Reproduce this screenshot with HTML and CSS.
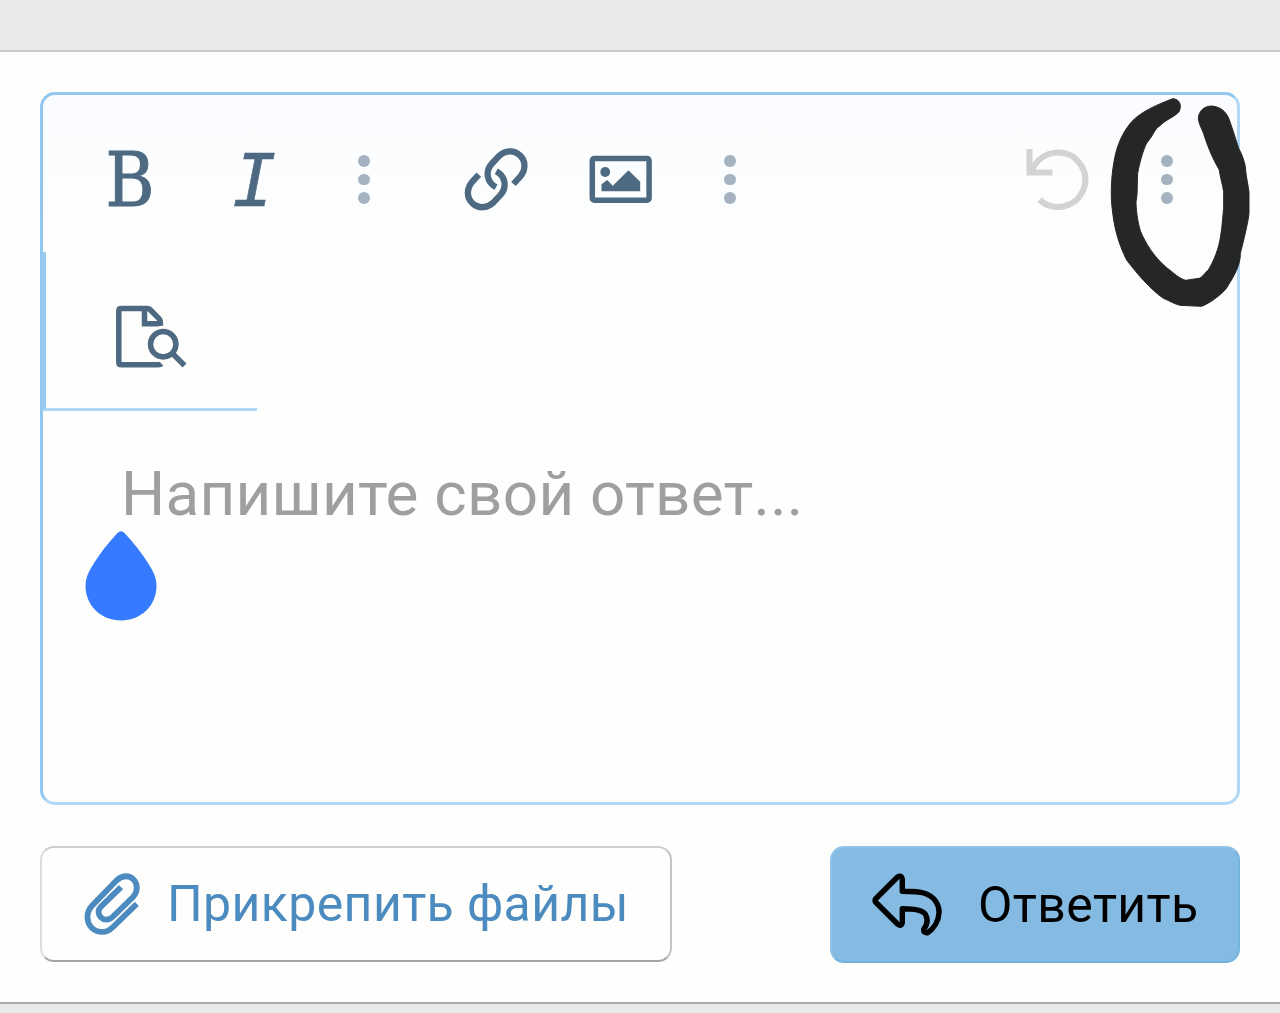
FILE: index.html
```html
<!DOCTYPE html>
<html lang="ru">
<head>
    <meta charset="UTF-8">
    <meta name="viewport" content="width=device-width, initial-scale=1.0">
    <title>Ответить</title>
    <link rel="stylesheet" href="styles.css">
</head>
<body>
    <div class="reply">
        <div class="editor">
            <div class="toolbar">
                <div class="group">
                    <button class="tool bold">B</button>
                    <button class="tool italic">I</button>
                    <button class="tool more"><i></i><i></i><i></i></button>
                </div>
                <div class="group">
                    <button class="tool">
                        <svg viewBox="0 0 80 80" stroke-width="6.3">
                            <path d="M57.5 44L62.5 38.5C71 30 69.5 20 63.5 15C57.5 9.5 49 10.5 43 16L36 23.5C29 31 30.5 42 40 47.3"/>
                            <path d="M57.5 44L62.5 38.5C71 30 69.5 20 63.5 15C57.5 9.5 49 10.5 43 16L36 23.5C29 31 30.5 42 40 47.3" transform="rotate(180 40.15 39.3)"/>
                        </svg>
                    </button>
                    <button class="tool">
                        <svg viewBox="0 0 80 80" stroke-width="5.5">
                            <rect x="11.3" y="18.5" width="56.8" height="41.7" rx="2"/>
                            <circle class="fill" cx="24.2" cy="32" r="4.9"/>
                            <path class="fill" d="M20.5 51.3V44.3L26.2 40L31.8 45.7L47.5 30.3L59.2 41.7V51.3Z"/>
                        </svg>
                    </button>
                    <button class="tool more"><i></i><i></i><i></i></button>
                </div>
                <div class="group right">
                    <button class="tool disabled">
                        <svg viewBox="0 0 80 80" stroke-width="6">
                            <path d="M13 33C17 20 28 12.400 39.800 12.400A27.3 27.3 0 1 1 21.5 59.8"/>
                            <path d="M11.5 9V32.5H34.5"/>
                        </svg>
                    </button>
                    <button class="tool more"><i></i><i></i><i></i></button>
                </div>
            </div>
            <div class="preview">
                <svg viewBox="0 0 80 80" stroke-width="5.5">
                    <path d="M50.5 66.8Q49.5 67.8 47 67.8H10.3Q7.8 67.8 7.8 65.3V14Q7.8 11.5 10.3 11.5H36.5Q38 11.5 39 12.5L48.2 21.8Q49.3 23 49.3 24.5V27"/>
                    <path d="M33.5 12V26.7H46L52 25.8"/>
                    <circle cx="52.2" cy="47.2" r="12.7"/>
                    <path d="M61.5 56.5L73.5 68.5"/>
                </svg>
            </div>
            <div class="content">
                <p>Напишите свой ответ...</p>
                <svg class="handle" viewBox="0 0 72 90">
                    <path d="M32.5 2Q36 -1.5 39.5 2C48 11 56 21 63 32C68 40 71.5 46 71.5 55C71.5 75 55.5 89.5 36 89.5C16.5 89.5 .5 75 .5 55C.5 46 4 40 9 32C16 21 24 11 32.5 2Z"/>
                </svg>
            </div>
        </div>
        <div class="actions">
            <button class="btn attach">
                <svg viewBox="0 0 56 62" stroke-width="5.8">
                    <path d="M52.8 30.8L28.5 54.5C22 61 12 60 7 54C2 48 2.3 39 7.8 33L32.5 7.5C38 2 45 2 49.5 6.5C54 11 54 18.5 49 24L28.5 44C25 47.5 20 47.5 17 44.5C14 41.5 13.5 37 17 33.7L37 14.2"/>
                </svg>
                <span>Прикрепить файлы</span>
            </button>
            <button class="btn submit">
                <svg viewBox="0 0 70 63" stroke-width="5.4" stroke-linejoin="round">
                    <path d="M4 25.5L25.5 4Q29.5 1.5 30.3 6V18.3C39 18.3 47 18.5 52.5 20.3C62 23.5 67.5 31 67 40C66.5 48 62 55.5 56 59.5Q51.5 60.5 51.7 56.3C55 52 56.5 47 53.5 41.5C51 37 43 35.7 30.3 35.7V49.5Q29.5 54 25.5 51L4 29.5Q2 27.5 4 25.5Z"/>
                </svg>
                <span>Ответить</span>
            </button>
        </div>
        <!-- marker stroke around the last menu -->
        <svg class="marker" viewBox="330 36 420 630">
            <path d="M518 41C475 58 425 78 395 110C365 145 350 185 343 225C334 270 331 330 337 375C342 420 352 470 380 525C410 565 450 612 490 640C510 648 525 658 540 661L605 664C640 650 680 615 685 600C705 570 722 535 721 505C730 470 745 410 747 385V320C744 300 738 270 737 255C737 240 728 212 716 190C705 155 697 130 688 105C678 75 655 64 634 63C610 64 596 80 595 100C596 118 610 140 612 150C625 190 640 225 658 255C660 275 668 300 671 320V370C668 395 666 430 663 445C658 490 640 530 625 555C615 562 605 580 597 580L557 586C535 580 515 558 500 548C460 515 435 470 422 440C412 410 408 370 408 350C413 330 411 300 413 265C420 225 435 180 442 172C460 150 465 130 480 122C495 105 525 95 537 80C545 65 542 42 518 41Z"/>
        </svg>
    </div>
</body>
</html>
```
FILE: styles.css
```css
* {
    box-sizing: border-box;
}
body {
    margin: 0;
    padding: 50px 0 10px;
    height: 1013px;
    background: #e9e9e9;
    font-family: Roboto, sans-serif;
    overflow: hidden;
}
.reply {
    position: relative;
    height: 954px;
    padding: 40px 40px 0;
    background: #fefefd;
    border-top: 2px solid #cbcbcb;
    border-bottom: 2px solid #a9a9a9;
}
button {
    padding: 0;
    border: none;
    background: none;
    font-family: inherit;
}
svg {
    display: block;
    fill: none;
    stroke: currentColor;
}
.fill {
    fill: currentColor;
    stroke: none;
}
.editor {
    height: 713px;
    border: 3px solid;
    border-color: #92c8f0 #b0d9f7 #b0d9f7 #92c8f0;
    border-radius: 15px;
    background: linear-gradient(#fafcff, #fefefd 160px);
}
.toolbar {
    display: flex;
    gap: 22px;
    height: 157px;
    padding: 12px 23px 0 24px;
    color: #4d6a82;
}
.group {
    display: flex;
    align-items: center;
}
.right {
    margin-left: auto;
}
.tool {
    display: flex;
    align-items: center;
    justify-content: center;
    width: 125px;
    height: 100px;
    color: #4d6a82;
}
.tool svg, .preview svg {
    width: 80px;
    height: 80px;
}
.bold {
    padding: 1px 0 0 1px;
    font: 74px "DejaVu Serif Condensed", "DejaVu Serif", serif;
    font-stretch: condensed;
    -webkit-text-stroke: 1px #4d6a82;
}
.italic {
    padding-top: 1px;
    font: italic 73px "DejaVu Sans Mono", monospace;
    -webkit-text-stroke: .5px #4d6a82;
}
.more {
    flex-direction: column;
    gap: 7px;
    width: 94px;
}
.more i {
    width: 11.6px;
    height: 11.6px;
    border-radius: 50%;
    background: #a4b3bf;
}
.disabled {
    color: #d3d3d2;
}
.preview {
    display: flex;
    align-items: center;
    width: 215px;
    height: 159px;
    margin-left: -1px;
    padding: 13px 0 0 65px;
    border-left: 4px solid #98caf0;
    border-bottom: 3px solid #b0d9f7;
    color: #4d6a82;
}
.content {
    padding: 46px 75px 0 78px;
}
.content p {
    margin: 0;
    color: #9f9f9e;
    font-size: 62px;
    line-height: 74px;
    letter-spacing: .25px;
    white-space: nowrap;
}
.content .handle {
    width: 72px;
    height: 90px;
    margin-left: -36px;
    fill: #357aff;
    stroke: none;
}
.actions {
    display: flex;
    justify-content: space-between;
    margin-top: 41px;
}
.btn {
    display: flex;
    align-items: center;
    height: 117px;
    border-radius: 14px;
    font-size: 50px;
    letter-spacing: .4px;
    white-space: nowrap;
}
.attach {
    width: 632px;
    height: 116px;
    padding-left: 42px;
    gap: 27px;
    border: 2px solid;
    border-color: #cfcfcf #c3c3c3 #a5a5a5 #dddddd;
    color: #4b8bbf;
}
.attach svg {
    width: 56px;
    height: 62px;
}
.submit {
    width: 410px;
    padding-left: 40px;
    gap: 36px;
    border: 2px solid;
    border-color: #92c2e9 #75b3df #75b3df #92c2e9;
    background: #85bbe2;
    color: #000;
}
.submit svg {
    width: 70px;
    height: 63px;
}
.marker {
    position: absolute;
    left: 1110px;
    top: 45px;
    width: 140px;
    height: 210px;
    fill: #252626;
    stroke: #252626;
    stroke-width: 3;
    stroke-linejoin: round;
}
```
